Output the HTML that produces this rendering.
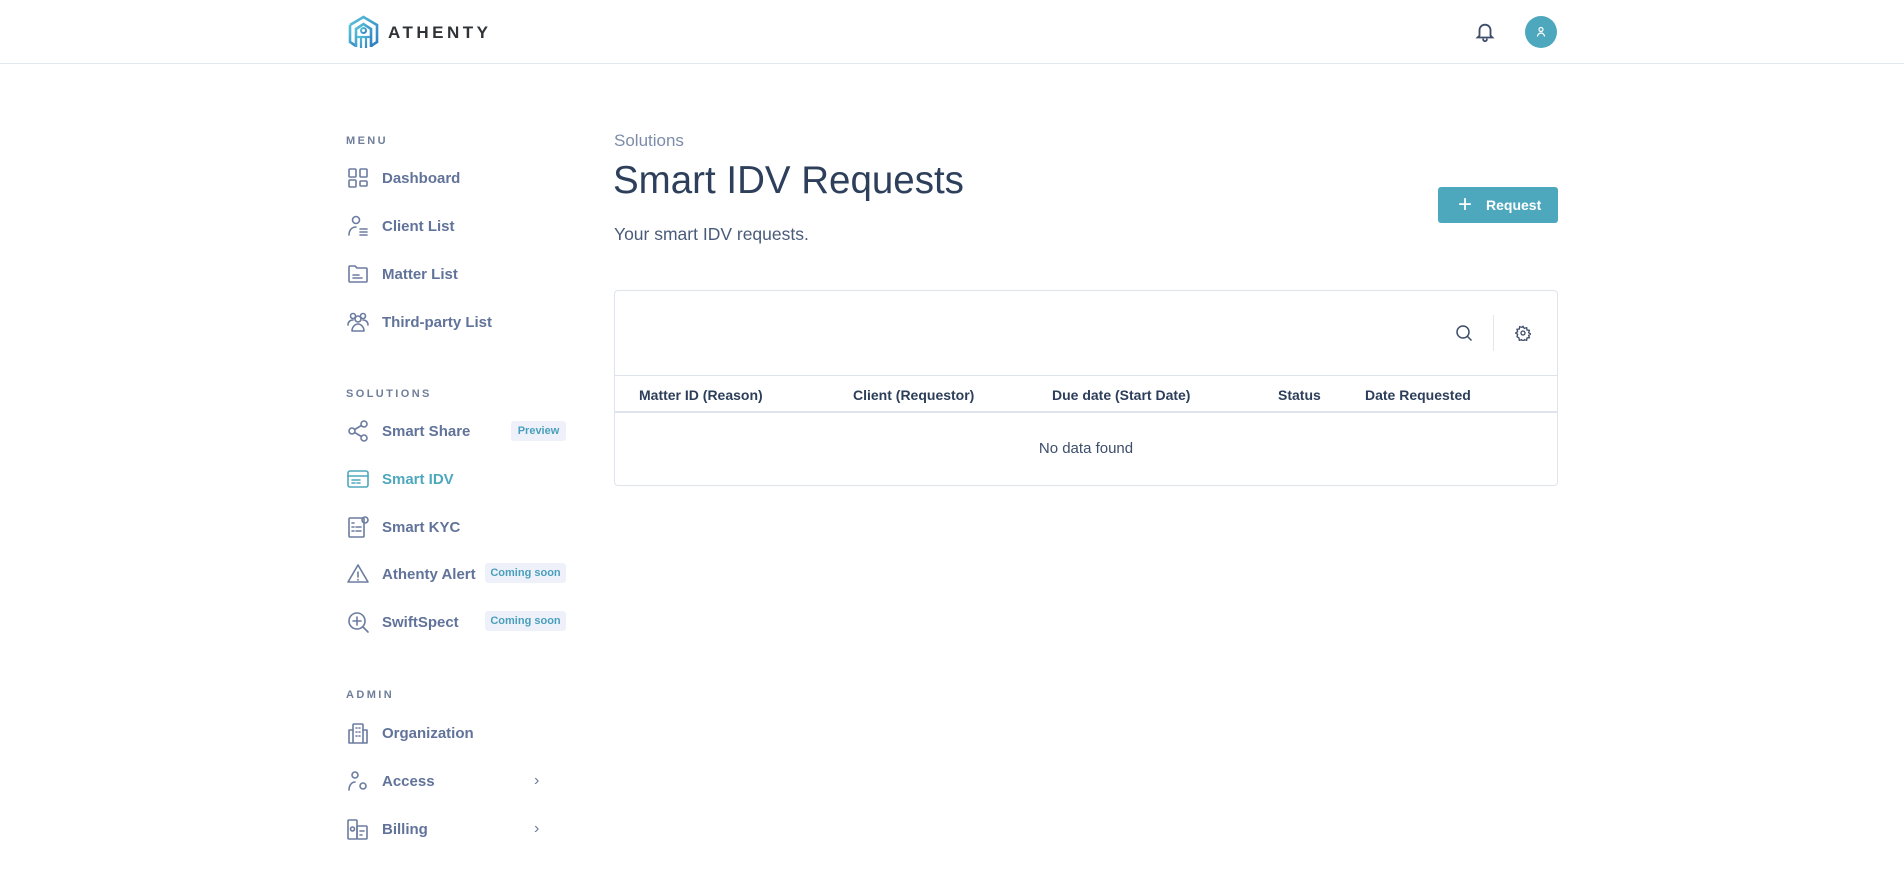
<!DOCTYPE html>
<html><head><meta charset="utf-8"><style>
*{box-sizing:border-box;margin:0;padding:0}
body{width:1904px;height:875px;background:#fff;font-family:"Liberation Sans",sans-serif;position:relative;overflow:hidden}
.hdr{position:absolute;left:0;top:0;width:1904px;height:64px;border-bottom:1px solid #e3e8f0}
.abs{position:absolute}
.sec{position:absolute;left:346px;font-size:11px;font-weight:bold;letter-spacing:2.4px;color:#6f7e99}
.item{position:absolute;left:346px;height:30px;display:flex;align-items:center;font-size:15px;font-weight:bold;color:#61739a}
.item svg{width:24px;height:24px;margin-right:12px;fill:none;stroke:#6b7ca0;stroke-width:1.6;stroke-linecap:round;stroke-linejoin:round}
.badge{position:absolute;left:0;height:20px;border-radius:3px;background:#eef1fa;color:#4a9fbc;font-size:11px;font-weight:bold;display:flex;align-items:center;justify-content:center}
.chev{position:absolute;left:534px;color:#6b7ca0;font-size:16px}
.th{position:absolute;top:387px;font-size:14px;color:#2c3e5a;font-weight:bold}
</style></head><body>
<div class="hdr"></div>
<svg class="abs" style="left:348px;top:15px" width="31" height="34" viewBox="0 0 31 34" fill="none" stroke-width="2.6">
<defs><linearGradient id="g" x1="0" y1="0" x2="1" y2="1"><stop offset="0" stop-color="#58c2d8"/><stop offset="1" stop-color="#2f7fc0"/></linearGradient></defs>
<path d="M2 10 L15.5 2 L29 10 V27 L23 31" stroke="url(#g)"/><path d="M2 10 V27 L8 31" stroke="url(#g)"/>
<path d="M8 32 V14 L15.5 9 L23 14 V32" stroke="url(#g)"/><circle cx="15.5" cy="15.5" r="2.5" stroke="url(#g)" stroke-width="2"/><path d="M9 22 H22 M13 22 V33 M18 22 V33" stroke="url(#g)" stroke-width="2.2"/>
</svg>
<div class="abs" style="left:388px;top:23px;font-size:17px;font-weight:bold;letter-spacing:3.5px;color:#2f3336">ATHENTY</div>
<svg class="abs" style="left:1474px;top:21px" width="22" height="22" viewBox="0 0 24 24" fill="none" stroke="#3d4d6a" stroke-width="2" stroke-linecap="round"><path d="M6 16V10a6 6 0 0112 0v6l2 2H4z"/><path d="M10 20a2 2 0 004 0"/></svg>
<div class="abs" style="left:1525px;top:16px;width:32px;height:32px;border-radius:50%;background:#4ea8bd"></div>
<svg class="abs" style="left:1533px;top:24px" width="16" height="16" viewBox="0 0 16 16" fill="none" stroke="#fff" stroke-width="1.2"><circle cx="8" cy="5.5" r="2"/><path d="M4.5 12.5a3.5 3.5 0 017 0"/></svg>

<div class="sec" style="top:135px">MENU</div>
<div class="item" style="top:163px"><svg viewBox="0 0 24 24"><rect x="3" y="3" width="7" height="8" rx="1"/><rect x="14" y="3" width="7" height="8" rx="1"/><rect x="3" y="14" width="7" height="7" rx="1"/><rect x="14" y="15" width="7" height="5" rx="1"/></svg>Dashboard</div>
<div class="item" style="top:211px"><svg viewBox="0 0 24 24"><circle cx="10" cy="6" r="3.5"/><path d="M3 21c0-5 3-8 7-8"/><path d="M14 15h7M14 18h7M14 21h7"/></svg>Client List</div>
<div class="item" style="top:259px"><svg viewBox="0 0 24 24"><path d="M3 5a1 1 0 011-1h5l2 2h9a1 1 0 011 1v12a1 1 0 01-1 1H4a1 1 0 01-1-1z"/><path d="M7 13h6M7 16h9"/></svg>Matter List</div>
<div class="item" style="top:307px"><svg viewBox="0 0 24 24"><circle cx="7" cy="6" r="2.5"/><circle cx="17" cy="6" r="2.5"/><circle cx="12" cy="9" r="3"/><path d="M2 15c0-3 2-5 5-5M22 15c0-3-2-5-5-5M6 21c0-4 3-7 6-7s6 3 6 7z"/></svg>Third-party List</div>

<div class="sec" style="top:388px">SOLUTIONS</div>
<div class="item" style="top:416px"><svg viewBox="0 0 24 24"><circle cx="6" cy="12" r="3"/><circle cx="18" cy="5" r="3"/><circle cx="18" cy="19" r="3"/><path d="M8.6 10.5l6.8-4M8.6 13.5l6.8 4"/></svg>Smart Share</div>
<div class="badge" style="left:511px;top:421px;width:55px">Preview</div>
<div class="item" style="top:464px;color:#4ea8bd"><svg viewBox="0 0 24 24" style="stroke:#4ea8bd"><rect x="2" y="4" width="20" height="16" rx="2"/><path d="M2 9h20M6 13h8M6 16h3M11 16h3"/></svg>Smart IDV</div>
<div class="item" style="top:512px"><svg viewBox="0 0 24 24"><rect x="3" y="3" width="15" height="19" rx="1"/><circle cx="19" cy="5" r="3"/><path d="M6 8h2M6 12h2M6 16h2M10 12h5M10 16h5"/></svg>Smart KYC</div>
<div class="item" style="top:559px"><svg viewBox="0 0 24 24"><path d="M12 3L2 20h20z"/><path d="M12 10v5M12 17.5v.5"/></svg>Athenty Alert</div>
<div class="badge" style="left:485px;top:563px;width:81px">Coming soon</div>
<div class="item" style="top:607px"><svg viewBox="0 0 24 24"><circle cx="11" cy="11" r="8"/><path d="M17 17l5 5M11 7v8M7 11h8"/></svg>SwiftSpect</div>
<div class="badge" style="left:485px;top:611px;width:81px">Coming soon</div>

<div class="sec" style="top:689px">ADMIN</div>
<div class="item" style="top:718px"><svg viewBox="0 0 24 24"><rect x="7" y="3" width="10" height="19" rx="1"/><path d="M7 9H3v13h4M17 9h4v13h-4M10 7h1M13 7h1M10 11h1M13 11h1M10 15h1M13 15h1"/></svg>Organization</div>
<div class="item" style="top:766px"><svg viewBox="0 0 24 24"><circle cx="9" cy="6" r="3"/><path d="M3 21c0-5 3-8 6-8"/><circle cx="17" cy="17" r="3"/></svg>Access</div>
<div class="chev" style="top:772px">›</div>
<div class="item" style="top:814px"><svg viewBox="0 0 24 24"><rect x="2" y="3" width="9" height="19" rx="1"/><rect x="11" y="9" width="10" height="13" rx="1"/><circle cx="6.5" cy="12" r="2"/><path d="M14 14h4M14 18h2"/></svg>Billing</div>
<div class="chev" style="top:820px">›</div>

<div class="abs" style="left:614px;top:131px;font-size:17px;color:#7d8ca8">Solutions</div>
<div class="abs" style="left:613px;top:159px;font-size:38.5px;color:#2d3f5b">Smart IDV Requests</div>
<div class="abs" style="left:614px;top:224px;font-size:17.5px;color:#4a5b78">Your smart IDV requests.</div>

<div class="abs" style="left:1438px;top:187px;width:120px;height:36px;border-radius:3px;background:#4ea8bd;color:#fff;font-size:14px;font-weight:bold;display:flex;align-items:center;padding-left:20px">
<span style="font-size:24px;font-weight:normal;margin-right:14px;line-height:1">+</span>Request</div>

<div class="abs" style="left:614px;top:290px;width:944px;height:196px;border:1px solid #dfe3ec;border-radius:4px"></div>
<div class="abs" style="left:615px;top:375px;width:942px;height:1px;background:#dfe3ec"></div>
<div class="abs" style="left:615px;top:411px;width:942px;height:2px;background:#dfe3ec"></div>
<svg class="abs" style="left:1455px;top:324px" width="18" height="18" viewBox="0 0 18 18" fill="none" stroke="#3d4d6a" stroke-width="1.5"><circle cx="8" cy="8" r="6"/><path d="M12.5 12.5l4 4"/></svg>
<div class="abs" style="left:1493px;top:315px;width:1px;height:36px;background:#e3e6ee"></div>
<svg class="abs" style="left:1515px;top:325px" width="16" height="16" viewBox="0 0 24 24" fill="none" stroke="#3d4d6a" stroke-width="2"><circle cx="12" cy="12" r="3"/><path d="M12 2l2 3 3.5-1 .5 3.5 3.5.5-1 3.5 3 2-3 2 1 3.5-3.5.5-.5 3.5-3.5-1-2 3-2-3-3.5 1-.5-3.5L3 17.5l1-3.5-3-2 3-2-1-3.5L6.5 6 7 2.5 10.5 3.5z"/></svg>
<div class="th" style="left:639px">Matter ID (Reason)</div>
<div class="th" style="left:853px">Client (Requestor)</div>
<div class="th" style="left:1052px">Due date (Start Date)</div>
<div class="th" style="left:1278px">Status</div>
<div class="th" style="left:1365px">Date Requested</div>
<div class="abs" style="left:614px;top:440px;width:944px;text-align:center;font-size:15px;color:#3d4d6a">No data found</div>
</body></html>
